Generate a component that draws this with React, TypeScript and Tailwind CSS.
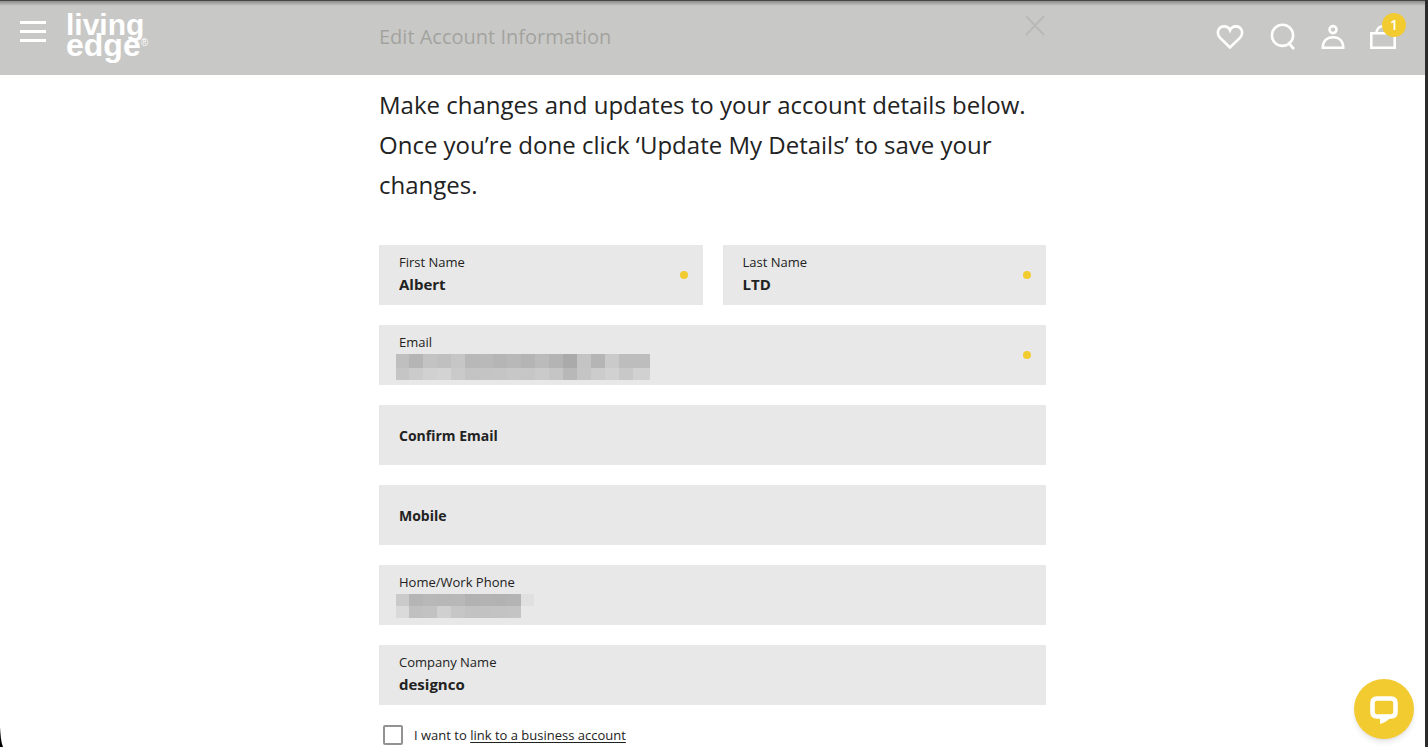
import React from "react";

type FieldProps = {
  id: string;
  label: string;
  value?: string;
  required?: boolean;
  children?: React.ReactNode;
};

const Field: React.FC<FieldProps> = ({ id, label, value, required, children }) => {
  return (
    <div className="relative flex h-[60px] min-w-0 flex-col bg-[#e8e8e8] px-5 pt-[7px]">
      <label htmlFor={id} className="text-[13px] leading-5">
        {label}
      </label>
      <input
        id={id}
        type="text"
        defaultValue={value}
        className="w-full bg-transparent text-[15px] leading-6 font-bold outline-none"
      />
      {children}
      {required && (
        <span className="absolute top-[26px] right-[15px] size-2 rounded-full bg-[#f2cb30]" />
      )}
    </div>
  );
};

const EmptyField: React.FC<{ id: string; label: string }> = ({ id, label }) => {
  return (
    <div className="relative h-[60px] bg-[#e8e8e8]">
      <label
        htmlFor={id}
        className="block px-5 pt-[21px] text-sm font-bold"
      >
        {label}
      </label>
      <input
        id={id}
        type="text"
        className="absolute inset-0 h-full w-full bg-transparent px-5 outline-none"
      />
    </div>
  );
};

const Mosaic: React.FC<{ rows: string[][]; width: number; height: number }> = ({
  rows,
  width,
  height,
}) => {
  return (
    <svg
      className="absolute top-[29px] left-[17px]"
      width={width}
      height={height}
      shapeRendering="crispEdges"
      aria-hidden="true"
    >
      {rows.map((row, y) =>
        row.map((color, x) => (
          <rect
            key={`${x}-${y}`}
            x={x * 14 - 1}
            y={y * (height > 24 ? 14 : 12)}
            width={14}
            height={14}
            fill={color}
          />
        ))
      )}
    </svg>
  );
};

const emailRows = [
  ["#bfbfbf", "#b5b5b5", "#c3c3c3", "#c0c0c0", "#c6c6c6", "#b8b8b8", "#b9b9b9", "#b5b5b5", "#b8b8b8", "#b4b4b4", "#bbbbbb", "#b4b4b4", "#aaaaaa", "#c4c4c4", "#b5b5b5", "#cacaca", "#bdbdbd", "#bdbdbd", "#bdbdbd"],
  ["#c5c5c5", "#cbcbcb", "#d1d1d1", "#d3d3d3", "#cacaca", "#c3c3c3", "#c4c4c4", "#c5c5c5", "#c7c7c7", "#c6c6c6", "#cacaca", "#c5c5c5", "#b8b8b8", "#c5c5c5", "#cccccc", "#d1d1d1", "#c8c8c8", "#d1d1d1", "#d1d1d1"],
];

const phoneRows = [
  ["#cacaca", "#b5b5b5", "#b8b8b8", "#b7b7b7", "#b8b8b8", "#b2b2b2", "#b3b3b3", "#b2b2b2", "#b4b4b4", "#e0e0e0"],
  ["#dadada", "#c0c0c0", "#c2c2c2", "#d0d0d0", "#c6c6c6", "#c2c2c2", "#c2c2c2", "#c3c3c3", "#c4c4c4", "#e8e8e8"],
];

const Header: React.FC = () => {
  return (
    <header className="absolute inset-x-0 top-0 flex h-[75px] justify-between border-t border-[#494747] bg-[#bdbdbb]/83 bg-linear-to-b from-black/30 to-transparent to-[5px] px-5 text-white">
      <div className="flex gap-5">
        <button type="button" aria-label="Menu" className="flex flex-col gap-1.5 self-start pt-5">
          <span className="h-[3px] w-[26px] bg-white" />
          <span className="h-[3px] w-[26px] bg-white" />
          <span className="h-[3px] w-[26px] bg-white" />
        </button>
        <a
          href="#"
          className="flex flex-col pt-[14px] font-['Liberation_Sans',sans-serif] text-[30px] leading-5 font-bold"
        >
          <span>living</span>
          <span className="flex items-start text-[32px]">
            edge<span className="text-[10px] leading-4 font-normal">®</span>
          </span>
        </a>
      </div>
      <nav className="flex items-start gap-6 pt-[22px] pr-[7px]">
        <a href="#" aria-label="Wishlist">
          <svg width="28" height="28" viewBox="0 0 28 28" fill="none" stroke="white" strokeWidth="2.6">
            <path d="M14 24.5 L4.1 14.9 C-0.2 10 2.4 3.4 8 3.4 C11 3.4 13 4.8 14 7.2 C15 4.8 17 3.4 20 3.4 C25.6 3.4 28.2 10 23.9 14.9 Z" />
          </svg>
        </a>
        <a href="#" aria-label="Search">
          <svg width="28" height="28" viewBox="0 0 28 28" fill="none" stroke="white" strokeWidth="2.6">
            <circle cx="14.5" cy="12.3" r="10.6" />
            <path d="M20 19.5 L26 26" />
          </svg>
        </a>
        <a href="#" aria-label="Account">
          <svg width="26" height="28" viewBox="0 0 26 28" fill="none" stroke="white" strokeWidth="2.6">
            <circle cx="13" cy="6.6" r="3.5" />
            <path d="M2.8 24.7 C2.8 18 7 14.2 13 14.2 C19 14.2 23.2 18 23.2 24.7 Z" />
          </svg>
        </a>
        <a href="#" aria-label="Bag" className="relative">
          <svg width="28" height="28" viewBox="0 0 28 28" fill="none" stroke="white" strokeWidth="2.6">
            <path d="M1.3 10.3 H24.7 V24.7 H1.3 Z M6.5 10 C7 1 19 1 19.5 10" />
          </svg>
          <span className="absolute -top-[10px] left-3 flex size-6 items-center justify-center rounded-full bg-[#f2cb30] text-sm font-semibold">
            1
          </span>
        </a>
      </nav>
    </header>
  );
};

const App: React.FC = () => {
  return (
    <div className="relative min-h-screen border-r-[3px] border-[#2b2b2b] bg-white font-['Open_Sans',sans-serif] text-[#222222]">
      <main className="mx-auto w-full max-w-[667px]">
        <div className="flex h-[75px] items-start justify-between">
          <h1 className="pt-[22px] text-xl leading-[30px] text-[#1c1c10]">
            Edit Account Information
          </h1>
          <button type="button" aria-label="Close" className="mt-[15px] text-[#a8a898]">
            <svg width="22" height="22" viewBox="0 0 22 22" stroke="currentColor" strokeWidth="2">
              <path d="M2 1 L20 20 M20 1 L2 20" />
            </svg>
          </button>
        </div>
        <p className="pt-[10px] text-2xl leading-10">
          Make changes and updates to your account details below. Once you’re
          done click ‘Update My Details’ to save your changes.
        </p>
        <form className="mt-10 flex flex-col gap-5">
          <div className="grid grid-cols-2 gap-5">
            <Field id="first-name" label="First Name" value="Albert" required />
            <Field id="last-name" label="Last Name" value="LTD" required />
          </div>
          <Field id="email" label="Email" required>
            <Mosaic rows={emailRows} width={254} height={26} />
          </Field>
          <EmptyField id="confirm-email" label="Confirm Email" />
          <EmptyField id="mobile" label="Mobile" />
          <Field id="phone" label="Home/Work Phone">
            <Mosaic rows={phoneRows} width={138} height={24} />
          </Field>
          <Field id="company" label="Company Name" value="designco" />
          <div className="flex items-center gap-[11px] px-1 text-[13px] leading-5">
            <input
              id="business"
              type="checkbox"
              className="size-5 appearance-none rounded-xs border-2 border-[#929292] bg-white"
            />
            <label htmlFor="business">
              I want to{" "}
              <a href="#" className="underline underline-offset-2">
                link to a business account
              </a>
            </label>
          </div>
        </form>
      </main>
      <Header />
      <svg
        className="absolute bottom-0 left-0"
        width="4"
        height="20"
        viewBox="0 0 4 20"
        aria-hidden="true"
      >
        <path d="M0 0 C0.5 8 1 15 3 20 H0 Z" fill="black" />
      </svg>
      <button
        type="button"
        aria-label="Open chat"
        className="fixed right-[14px] bottom-2 flex size-[60px] items-center justify-center rounded-full bg-[#f2cb30] shadow-md"
      >
        <svg width="30" height="30" viewBox="0 0 30 30">
          <path
            d="M8 4.5 H22 Q26.5 4.5 26.5 9 V18 Q26.5 22.5 22 22.5 H8 Q3.5 22.5 3.5 18 V9 Q3.5 4.5 8 4.5 Z"
            fill="none"
            stroke="white"
            strokeWidth="4.6"
          />
          <path d="M11 21 V30 Q17 28.5 21 24 V20.5 Z" fill="white" />
        </svg>
      </button>
    </div>
  );
};

export default App;
